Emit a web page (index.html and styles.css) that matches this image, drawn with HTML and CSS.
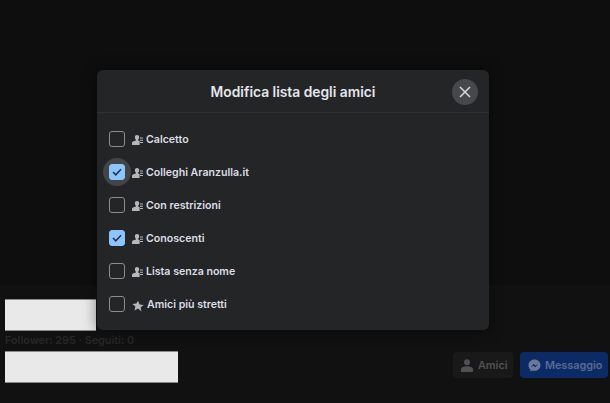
FILE: index.html
```html
<!DOCTYPE html>
<html lang="it">
<head>
    <meta charset="UTF-8">
    <meta name="viewport" content="width=device-width, initial-scale=1.0">
    <title>Modifica lista degli amici</title>
    <link rel="stylesheet" href="styles.css">
</head>
<body>

    <svg class="icon-defs" width="0" height="0">
        <symbol id="list-icon" viewBox="0 0 11 10">
            <path d="M5 0C6.300 0 7.200 .9 7.200 2.200c0 1.100-.5 2-1.100 2.500v.9l1.500.5V10H0V8c0-.9.600-1.500 1.500-1.800l2.400-.6v-.9C3.300 4.200 2.900 3.300 2.900 2.200 2.900 .9 3.800 0 5 0z"/>
            <path d="M8 2.600H11v1H8zM8 4.800H11v1H8zM8 7H11v1H8z"/>
        </symbol>
    </svg>

    <div class="profile">
        <div class="profile-info">
            <div class="redacted redacted-name"></div>
            <p class="stats">Follower: 295 · Seguiti: 0</p>
            <div class="redacted redacted-sub"></div>
        </div>
        <div class="profile-actions">
            <div class="btn btn-friends">
                <svg width="12" height="13" viewBox="0 0 12 13"><circle cx="6" cy="3.200" r="3"/><path d="M0 13v-2.500C0 8.400 2.600 7.200 6 7.200s6 1.200 6 3.300V13z"/></svg>
                Amici
            </div>
            <div class="btn btn-message">
                <svg width="13" height="13" viewBox="0 0 14 14"><path d="M7 .5C3.300 .5.500 3.200.500 6.700c0 1.900.8 3.500 2.100 4.600v2.200l2.100-1.100c.7.200 1.500.3 2.300.3 3.700 0 6.500-2.700 6.500-6S10.700.5 7 .5z"/><path class="bolt" d="M3.200 8.800 6 5.400l2 1.500 2.800-1.500L8 8.800 6 7.300z"/></svg>
                Messaggio
            </div>
        </div>
    </div>

    <div class="modal">
        <div class="modal-header">
            <h1>Modifica lista degli amici</h1>
            <div class="close-btn">
                <svg width="14" height="14" viewBox="0 0 14 14"><path d="M2 2l10 10M12 2L2 12"/></svg>
            </div>
        </div>
        <ul class="list">
            <li class="list-row">
                <span class="checkbox"></span>
                <svg class="row-icon" width="11" height="10"><use href="#list-icon"/></svg>
                Calcetto
            </li>
            <li class="list-row">
                <span class="focus-ring"></span>
                <span class="checkbox checked">
                    <svg width="10" height="8" viewBox="0 0 10 8"><path d="M1 4l2.800 2.800L9 1.200"/></svg>
                </span>
                <svg class="row-icon" width="11" height="10"><use href="#list-icon"/></svg>
                Colleghi Aranzulla.it
            </li>
            <li class="list-row">
                <span class="checkbox"></span>
                <svg class="row-icon" width="11" height="10"><use href="#list-icon"/></svg>
                Con restrizioni
            </li>
            <li class="list-row">
                <span class="checkbox checked">
                    <svg width="10" height="8" viewBox="0 0 10 8"><path d="M1 4l2.800 2.800L9 1.200"/></svg>
                </span>
                <svg class="row-icon" width="11" height="10"><use href="#list-icon"/></svg>
                Conoscenti
            </li>
            <li class="list-row">
                <span class="checkbox"></span>
                <svg class="row-icon" width="11" height="10"><use href="#list-icon"/></svg>
                Lista senza nome
            </li>
            <li class="list-row">
                <span class="checkbox"></span>
                <svg class="row-icon star" width="12" height="12" viewBox="0 0 12 12"><path d="M6 .8l1.600 3.700 4 .4-3 2.600.9 3.900L6 8.400l-3.500 2.000.9-3.900-3-2.600 4-.4z"/></svg>
                Amici più stretti
            </li>
        </ul>
    </div>

</body>
</html>
```

FILE: styles.css
```css
html, body {
    height: 100%;
}
body {
    font-family: Inter, "Liberation Sans", Arial, sans-serif;
    background-color: #0e0e0f;
    margin: 0;
    color: #e4e6eb;
    display: flex;
    flex-direction: column;
    justify-content: flex-end;
    overflow: hidden;
}
.icon-defs {
    position: absolute;
}
.profile {
    display: flex;
    justify-content: space-between;
    align-items: flex-end;
    background-color: #111112;
    height: 118px;
    box-sizing: border-box;
    padding: 16px 2px 20px 5px;
}
.redacted {
    background-color: #e9e9e9;
    border: 1px solid #8a8a8a;
    border-width: 1px 0;
    box-sizing: border-box;
    height: 32px;
}
.redacted-name {
    width: 91px;
}
.redacted-sub {
    width: 173px;
}
.stats {
    margin: 3px 0 4px;
    font-size: 10.800px;
    font-weight: 600;
    line-height: 13px;
    color: #272728;
}
.profile-actions {
    display: flex;
    gap: 7px;
    margin-bottom: 5px;
}
.btn {
    display: flex;
    align-items: center;
    gap: 5px;
    height: 26px;
    border-radius: 4px;
    font-size: 10.800px;
    font-weight: 600;
    box-sizing: border-box;
}
.btn-friends {
    background-color: #19191a;
    color: #505153;
    width: 60px;
    padding-left: 8px;
}
.btn-friends svg {
    fill: #505153;
}
.btn-message {
    background-color: #0c2a66;
    color: #5a6b8f;
    width: 88px;
    padding-left: 8px;
    gap: 4px;
    white-space: nowrap;
}
.btn-message svg {
    fill: #6a7a9a;
}
.btn-message .bolt {
    fill: #0c2a66;
}
.modal {
    position: absolute;
    left: 97px;
    top: 70px;
    width: 392px;
    height: 260px;
    background-color: #242527;
    border-radius: 6px;
    box-shadow: 0 0 14px rgba(0, 0, 0, 0.5);
}
.modal-header {
    position: relative;
    height: 42px;
    display: flex;
    align-items: center;
    justify-content: center;
    border-bottom: 1px solid #2f3032;
}
.modal-header h1 {
    margin: 2px 0 0;
    font-size: 13.800px;
    font-weight: 600;
    color: #e4e6eb;
}
.close-btn {
    position: absolute;
    right: 11px;
    top: 9px;
    width: 26px;
    height: 26px;
    border-radius: 50%;
    background-color: #47484b;
    display: flex;
    align-items: center;
    justify-content: center;
}
.close-btn svg {
    fill: none;
    stroke: #d8d9dc;
    stroke-width: 1.500;
}
.list {
    list-style: none;
    margin: 0;
    padding: 9.500px 0 0 12px;
}
.list-row {
    position: relative;
    display: flex;
    align-items: center;
    height: 33px;
    font-size: 10.600px;
    font-weight: 600;
    color: #dcdee3;
}
.checkbox {
    position: relative;
    width: 16px;
    height: 16px;
    box-sizing: border-box;
    border: 1.500px solid #8b8c90;
    border-radius: 3px;
    margin-right: 7px;
    display: flex;
    align-items: center;
    justify-content: center;
}
.checkbox.checked {
    background-color: #8cc4fb;
    border-color: #8cc4fb;
}
.focus-ring {
    position: absolute;
    left: -6px;
    top: 2.500px;
    width: 28px;
    height: 28px;
    border-radius: 50%;
    background-color: #434446;
}
.checkbox svg {
    fill: none;
    stroke: #1d3350;
    stroke-width: 1.500;
}
.row-icon {
    fill: #b5b7bb;
    margin: 2px 3px 0 0;
}
.star {
    margin: 4px 3px 0 0;
    width: 12px;
}
```
